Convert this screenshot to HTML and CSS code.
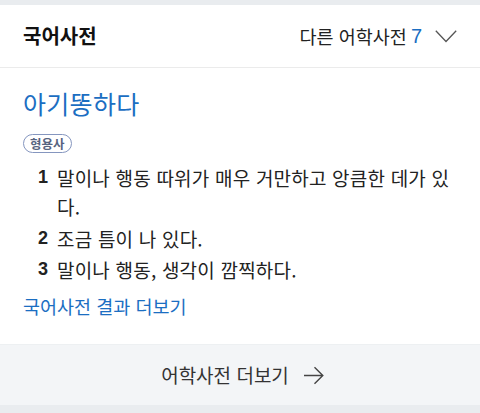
FILE: index.html
```html
<!DOCTYPE html>
<html lang="ko">
<head>
<meta charset="utf-8">
<link rel="stylesheet" href="styles.css">
</head>
<body>
<div class="page">
  <section class="card">
    <header class="card-head">
      <h2 class="card-title">국어사전</h2>
      <div class="other">
        <span class="other-label">다른 어학사전</span>
        <span class="other-count">7</span>
        <svg class="chevron" width="22" height="13" viewBox="0 0 22 13"><polyline points="0.8,0.8 11,11.5 21.2,0.8" fill="none" stroke="#555" stroke-width="1.3"/></svg>
      </div>
    </header>
    <div class="card-body">
      <div class="entry">아기똥하다</div>
      <span class="badge">형용사</span>
      <ol class="defs">
        <li class="def"><span class="num">1</span><span class="txt">말이나 행동 따위가 매우 거만하고 앙큼한 데가 있다.</span></li>
        <li class="def"><span class="num">2</span><span class="txt">조금 틈이 나 있다.</span></li>
        <li class="def"><span class="num">3</span><span class="txt">말이나 행동, 생각이 깜찍하다.</span></li>
      </ol>
      <a class="more-link">국어사전 결과 더보기</a>
    </div>
  </section>
  <div class="more-all">
    <span>어학사전 더보기</span>
    <svg class="arrow" width="20" height="19" viewBox="0 0 20 19"><path d="M0 9.5 H18.5 M10.5 1.2 L18.8 9.5 L10.5 17.8" fill="none" stroke="#444" stroke-width="1.4"/></svg>
  </div>
</div>
</body>
</html>
```
FILE: styles.css
```css
* { box-sizing: border-box; margin: 0; padding: 0; }
html, body { background: #e9ecef; }
body {
  font-family: "Noto Sans CJK KR", "Noto Sans", sans-serif;
  color: #222;
  width: 480px;
  height: 413px;
  overflow: hidden;
}
.page { padding-top: 5px; }
.card { background: #fff; }
.card-head {
  height: 63px;
  display: flex;
  align-items: center;
  justify-content: space-between;
  padding: 0 23px 0 23px;
  border-bottom: 1px solid #ebebeb;
}
.card-title {
  font-size: 20px;
  font-weight: 700;
  color: #111;
  line-height: 26px;
  padding-bottom: 1px;
}
.other {
  display: flex;
  align-items: center;
  font-size: 18.5px;
  line-height: 26px;
  color: #222;
  padding-bottom: 1px;
}
.other-count {
  color: #1b6ec2;
  margin-left: 4px;
  font-family: "Liberation Sans", sans-serif;
  font-size: 20px;
}
.chevron { margin-left: 13px; margin-top: 1px; }
.card-body {
  padding: 18px 23px 26px 23px;
}
.entry {
  font-size: 25px;
  letter-spacing: 0.3px;
  line-height: 34px;
  color: #1b6ec2;
}
.badge {
  display: inline-block;
  margin-top: 14px;
  height: 19px;
  padding: 0 6px;
  border: 1px solid #8596bf;
  border-radius: 10px;
  font-size: 12.5px;
  line-height: 17px;
  font-weight: 700;
  color: #56637f;
}
.defs {
  list-style: none;
  margin-top: 9px;
  display: flex;
  flex-direction: column;
  gap: 2.5px;
}
.def {
  display: flex;
  font-size: 19px;
  letter-spacing: 0.2px;
  line-height: 29px;
  padding-left: 15px;
}
.num {
  flex: none;
  width: 19px;
  font-weight: 700;
  font-family: "Liberation Sans", "Noto Sans", sans-serif;
  font-size: 18px;
  letter-spacing: 0;
}
.txt { flex: 1; }
.more-link {
  display: block;
  margin-top: 9.5px;
  font-size: 18.5px;
  line-height: 24px;
  color: #1b6ec2;
}
.more-all {
  height: 61px;
  background: #f3f5f7;
  border-top: 1px solid #edf0f2;
  display: flex;
  align-items: center;
  justify-content: center;
  gap: 15px;
  font-size: 19px;
  line-height: 24px;
  color: #333;
  padding-left: 5px;
}
.arrow { margin-top: 1px; }
```
